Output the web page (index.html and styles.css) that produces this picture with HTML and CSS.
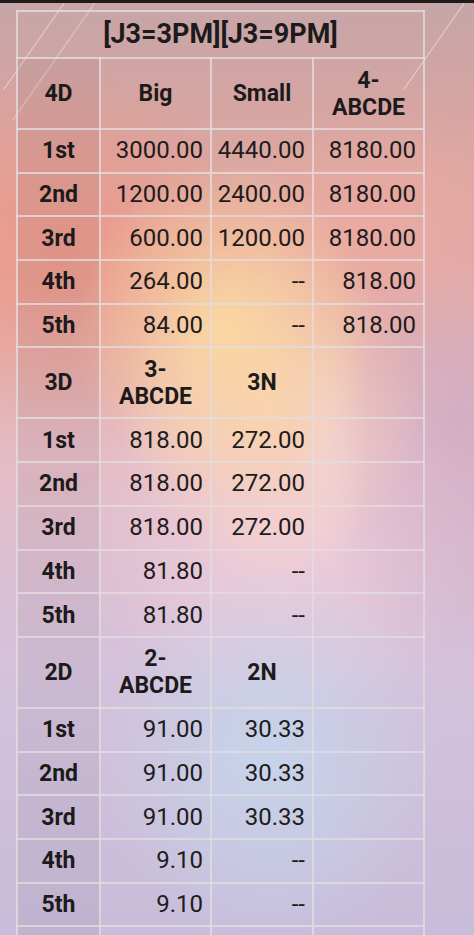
FILE: index.html
```html
<!DOCTYPE html>
<html>
<head>
<meta charset="utf-8">
<link rel="stylesheet" href="styles.css">
</head>
<body>
<div class="statusbar"></div>
<div class="page">
  <div class="streaks"></div>
  <table class="prize">
    <colgroup>
      <col class="c1"><col class="c2"><col class="c3"><col class="c4">
    </colgroup>
    <tr class="title"><th colspan="4">[J3=3PM][J3=9PM]</th></tr>
    <tr class="head"><th class="rank">4D</th><th>Big</th><th>Small</th><th>4-<br>ABCDE</th></tr>
    <tr class="row"><th class="rank">1st</th><td>3000.00</td><td>4440.00</td><td>8180.00</td></tr>
    <tr class="row"><th class="rank">2nd</th><td>1200.00</td><td>2400.00</td><td>8180.00</td></tr>
    <tr class="row"><th class="rank">3rd</th><td>600.00</td><td>1200.00</td><td>8180.00</td></tr>
    <tr class="row"><th class="rank">4th</th><td>264.00</td><td>--</td><td>818.00</td></tr>
    <tr class="row"><th class="rank">5th</th><td>84.00</td><td>--</td><td>818.00</td></tr>
    <tr class="head"><th class="rank">3D</th><th>3-<br>ABCDE</th><th>3N</th><th></th></tr>
    <tr class="row"><th class="rank">1st</th><td>818.00</td><td>272.00</td><td></td></tr>
    <tr class="row"><th class="rank">2nd</th><td>818.00</td><td>272.00</td><td></td></tr>
    <tr class="row"><th class="rank">3rd</th><td>818.00</td><td>272.00</td><td></td></tr>
    <tr class="row"><th class="rank">4th</th><td>81.80</td><td>--</td><td></td></tr>
    <tr class="row"><th class="rank">5th</th><td>81.80</td><td>--</td><td></td></tr>
    <tr class="head"><th class="rank">2D</th><th>2-<br>ABCDE</th><th>2N</th><th></th></tr>
    <tr class="row"><th class="rank">1st</th><td>91.00</td><td>30.33</td><td></td></tr>
    <tr class="row"><th class="rank">2nd</th><td>91.00</td><td>30.33</td><td></td></tr>
    <tr class="row"><th class="rank">3rd</th><td>91.00</td><td>30.33</td><td></td></tr>
    <tr class="row"><th class="rank">4th</th><td>9.10</td><td>--</td><td></td></tr>
    <tr class="row"><th class="rank">5th</th><td>9.10</td><td>--</td><td></td></tr>
    <tr class="row"><th class="rank"></th><td></td><td></td><td></td></tr>
  </table>
</div>
</body>
</html>
```
FILE: styles.css
```css
html, body {
  margin: 0;
  padding: 0;
}
body {
  width: 474px;
  height: 935px;
  overflow: hidden;
  font-family: Roboto, "Noto Sans", sans-serif;
  color: #1c1a1a;
  background:
    radial-gradient(ellipse 150px 170px at 225px 330px, rgba(252, 218, 160, 0.9), rgba(252, 218, 160, 0) 100%),
    radial-gradient(ellipse 150px 170px at 270px 410px, rgba(250, 212, 178, 0.75), rgba(250, 212, 178, 0) 100%),
    radial-gradient(ellipse 200px 190px at 60px 250px, rgba(236, 148, 132, 0.8), rgba(236, 148, 132, 0) 100%),
    radial-gradient(ellipse 170px 130px at 380px 230px, rgba(238, 170, 160, 0.7), rgba(238, 170, 160, 0) 100%),
    radial-gradient(ellipse 170px 200px at 270px 760px, rgba(196, 214, 236, 0.9), rgba(196, 214, 236, 0) 100%),
    radial-gradient(ellipse 150px 260px at 460px 420px, rgba(200, 168, 200, 0.6), rgba(200, 168, 200, 0) 100%),
    radial-gradient(ellipse 200px 200px at 280px 530px, rgba(245, 210, 222, 0.8), rgba(245, 210, 222, 0) 100%),
    linear-gradient(180deg, #c6a5a8 0%, #d6a5a2 12%, #e6aaa0 28%, #e3bcc6 50%, #d4c2dc 72%, #c7bcd9 100%);
}
.statusbar {
  height: 3px;
  background: #1d1b1c;
}
.page {
  position: relative;
  padding: 7px 0 0 16px;
}
.streaks {
  position: absolute;
  inset: 0;
  pointer-events: none;
  background:
    linear-gradient(125deg, transparent 0 49%, rgba(255,255,255,0.35) 49.6% 50.2%, transparent 50.8%) 0 -3px / 70px 90px no-repeat,
    linear-gradient(125deg, transparent 0 49%, rgba(255,255,255,0.25) 49.6% 50.2%, transparent 50.8%) 10px -3px / 90px 120px no-repeat,
    linear-gradient(125deg, transparent 0 49%, rgba(255,255,255,0.35) 49.6% 50.2%, transparent 50.8%) 400px -3px / 70px 90px no-repeat,
    radial-gradient(ellipse 40px 130px at 50% 50%, rgba(255,255,255,0.16), rgba(255,255,255,0) 100%) 220px 300px / 220px 280px no-repeat;
}
.prize {
  position: relative;
  border-collapse: collapse;
  table-layout: fixed;
  width: 409px;
}
.c1 { width: 83px; }
.c2 { width: 111px; }
.c3 { width: 102px; }
.c4 { width: 111px; }
.prize th, .prize td {
  border: 2px solid rgba(226, 220, 222, 0.8);
  padding: 0 7px 0 2px;
  font-size: 24px;
  line-height: 27px;
  vertical-align: middle;
}
.prize th {
  font-weight: 700;
  font-size: 23px;
  text-align: center;
  padding: 0 2px;
}
.prize td {
  font-weight: 400;
  text-align: right;
  color: #211b1b;
}
.title { height: 47px; }
.prize .title th { font-size: 27px; }
.head { height: 71px; }
.row { height: 43.7px; }
.rank {
  background: rgba(90, 70, 80, 0.07);
}
```
